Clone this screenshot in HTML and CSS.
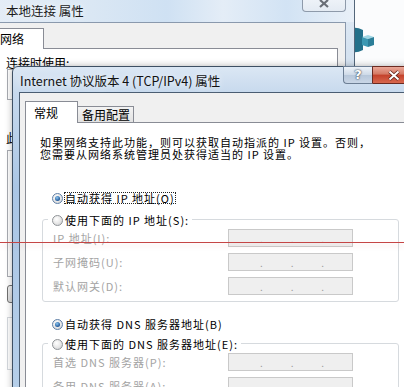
FILE: index.html
```html
<!DOCTYPE html>
<html lang="zh-CN">
<head>
  <meta charset="UTF-8" />
  <title>Internet 协议版本 4 (TCP/IPv4) 属性</title>
  <link rel="stylesheet" href="styles.css">
</head>
<body>

  <div class="desk-icon">
    <svg width="24" height="28" viewBox="0 0 24 28">
      <path d="M1 2 Q5 1 11 4 L11 24 Q5 27 1 26 Q3 14 1 2 Z" fill="#23708a"/>
      <path d="M10 11 L16 9 L22 11 L16 13 Z" fill="#9fd6e4"/>
      <path d="M10 11 L16 13 L16 21 L10 19 Z" fill="#3b98b2"/>
      <path d="M16 13 L22 11 L22 19 L16 21 Z" fill="#2b7e98"/>
    </svg>
  </div>

  <!-- window behind -->
  <div class="win win-back">
    <div class="titlebar">
      <div class="title">本地连接 属性</div>
      <div class="btn-close">
        <svg width="12" height="9" viewBox="0 0 12 9"><path d="M2 1 L10 8 M10 1 L2 8" stroke="#6a6f77" stroke-width="2.2"/></svg>
      </div>
    </div>
    <div class="client">
      <div class="tabs">
        <div class="tab active">网络</div>
      </div>
      <div class="panel">
        <div class="lbl">连接时使用:</div>
        <div class="box adapter"></div>
        <div class="lbl gap">此连接使用下列项目:</div>
        <div class="box list"></div>
        <div class="box small-btn"></div>
        <div class="box desc"></div>
      </div>
    </div>
  </div>

  <!-- front dialog -->
  <div class="win win-front">
    <div class="titlebar">
      <div class="title">Internet 协议版本 4 (TCP/IPv4) 属性</div>
      <div class="btn-help">?</div>
      <div class="btn-close">
        <svg width="14" height="11" viewBox="0 0 14 11">
          <path d="M2.5 1.5 L11.5 9.5 M11.5 1.5 L2.5 9.5" stroke="#5b1f16" stroke-width="3.6"/>
          <path d="M2.5 1.5 L11.5 9.5 M11.5 1.5 L2.5 9.5" stroke="#fff" stroke-width="2"/>
        </svg>
      </div>
    </div>
    <div class="client">
      <div class="tabs">
        <div class="tab active">常规</div>
        <div class="tab">备用配置</div>
      </div>
      <div class="panel">
        <p class="intro">如果网络支持此功能，则可以获取自动指派的 IP 设置。否则，<br>您需要从网络系统管理员处获得适当的 IP 设置。</p>

        <div class="opt first">
          <span class="radio on"></span><span class="focus">自动获得 IP 地址(O)</span>
        </div>
        <div class="group">
          <div class="opt legend">
            <span class="radio"></span><span class="txt">使用下面的 IP 地址(S):</span>
          </div>
          <div class="field-row">
            <span class="flabel">IP 地址(I):</span>
            <span class="ip"><span>.</span><span>.</span><span>.</span></span>
          </div>
          <div class="field-row">
            <span class="flabel">子网掩码(U):</span>
            <span class="ip"><span>.</span><span>.</span><span>.</span></span>
          </div>
          <div class="field-row">
            <span class="flabel">默认网关(D):</span>
            <span class="ip"><span>.</span><span>.</span><span>.</span></span>
          </div>
        </div>

        <div class="opt dns">
          <span class="radio on"></span><span class="txt">自动获得 DNS 服务器地址(B)</span>
        </div>
        <div class="group dns-group">
          <div class="opt legend">
            <span class="radio"></span><span class="txt">使用下面的 DNS 服务器地址(E):</span>
          </div>
          <div class="field-row">
            <span class="flabel">首选 DNS 服务器(P):</span>
            <span class="ip"><span>.</span><span>.</span><span>.</span></span>
          </div>
          <div class="field-row">
            <span class="flabel">备用 DNS 服务器(A):</span>
            <span class="ip"><span>.</span><span>.</span><span>.</span></span>
          </div>
        </div>
      </div>
    </div>
  </div>

  <div class="mark-line"></div>

</body>
</html>
```

FILE: styles.css
```css
body {
  margin: 0;
  width: 404px;
  height: 387px;
  overflow: hidden;
  position: relative;
  background: #fbfcfd;
  font-family: "Noto Sans CJK SC", sans-serif;
  color: #000;
}

.desk-icon {
  position: absolute;
  left: 352px;
  top: 26px;
}

.win {
  position: absolute;
  box-sizing: border-box;
}

/* ---- back window ---- */
.win-back {
  left: -20px;
  top: -8px;
  width: 375px;
  height: 420px;
  border-right: 1px solid #53667a;
  background: linear-gradient(180deg, #e3ecf6 0, #d5e2f0 60px, #d9e3ee 100%);
}
.win-back .titlebar {
  height: 30px;
  display: flex;
  align-items: flex-start;
  padding: 0 8px 0 26px;
  box-sizing: border-box;
  background: linear-gradient(90deg, #e6eef7 0%, #dae7f4 30%, #cfe1f3 50%, #e4edf7 65%, #d2e3f4 82%, #e9f0f8 100%);
}
.win-back .title {
  flex: 1;
  margin-top: 8px;
  line-height: 22px;
  font-size: 12.5px;
  color: #1b1b1b;
  text-shadow: 0 0 6px #fff;
}
.win-back .btn-close {
  width: 44px;
  height: 20px;
  box-sizing: border-box;
  border: 1px solid #8e9aaa;
  border-top: none;
  border-radius: 0 0 4px 4px;
  background: linear-gradient(#f4f7fb, #e4ebf3);
  display: flex;
  align-items: flex-end;
  justify-content: center;
  padding-bottom: 3px;
}
.win-back .client {
  margin: 0 8px;
  height: 390px;
  box-sizing: border-box;
  border: 1px solid #8a99ad;
  border-bottom: none;
  background: #f0f0f0;
  padding-top: 5px;
}
.win-back .tab {
  width: 55px;
  height: 21px;
  box-sizing: border-box;
  margin-bottom: -1px;
  padding-left: 10px;
  border: 1px solid #898c95;
  border-bottom: none;
  background: #fff;
  font-size: 12px;
  line-height: 20px;
  position: relative;
  z-index: 1;
}
.win-back .panel {
  margin-right: 7px;
  height: 360px;
  box-sizing: border-box;
  border: 1px solid #898c95;
  background: #fff;
  padding: 8px 0 0 16px;
}
.lbl {
  font-size: 12px;
  line-height: 12px;
}
.lbl.gap {
  margin-top: 32px;
}
.box {
  margin-left: 1px;
  width: 300px;
  box-sizing: border-box;
  border: 1px solid #a9acb2;
  background: #fff;
}
.adapter {
  height: 31px;
}
.list {
  margin-top: 6px;
  height: 127px;
}
.small-btn {
  margin-top: 8px;
  width: 70px;
  height: 18px;
  border-color: #707070;
  border-radius: 3px;
  background: linear-gradient(#f2f2f2, #dcdcdc);
}
.desc {
  margin-top: 14px;
  height: 53px;
  border-color: #d5d9de;
}

/* ---- front dialog ---- */
.win-front {
  left: 12px;
  top: 66px;
  width: 404px;
  height: 340px;
  border: 1px solid #3e5064;
  border-radius: 6px 6px 0 0;
  background: linear-gradient(180deg, #dbe7f4 0, #c7d9ed 26px, #aac6e5 120px, #b6cfe9 100%);
  box-shadow: 0 0 7px rgba(0, 0, 0, .3);
}
.win-front .titlebar {
  height: 25px;
  display: flex;
  align-items: flex-start;
  padding-left: 7px;
}
.win-front .title {
  flex: 1;
  padding-top: 2px;
  line-height: 24px;
  font-size: 12.5px;
  color: #111;
  text-shadow: 0 0 7px #fff;
}
.btn-help {
  width: 29px;
  height: 18px;
  margin-top: -1px;
  box-sizing: border-box;
  border: 1px solid #6c7e94;
  border-right: none;
  border-radius: 0 0 0 4px;
  background: linear-gradient(#eef3f9, #cdd9e7 50%, #b7c7da 51%, #c9d6e6);
  text-align: center;
  font: bold 13px/16px "DejaVu Sans", sans-serif;
  color: #fff;
  text-shadow: 0 0 1px #2e3c4e, 0 0 2px #2e3c4e;
}
.win-front .btn-close {
  width: 43px;
  height: 18px;
  margin-top: -1px;
  box-sizing: border-box;
  border: 1px solid #6b2a21;
  border-radius: 0 0 4px 0;
  background: linear-gradient(#eaa798, #d47863 45%, #c4412b 50%, #d8684f);
  display: flex;
  align-items: center;
  justify-content: center;
}
.win-front .client {
  margin: 0 6px;
  height: 320px;
  box-sizing: border-box;
  border: 1px solid #4a5d72;
  border-bottom: none;
  background: #f0f0f0;
  padding: 8px 0 0 5px;
}
.tabs {
  display: flex;
  align-items: flex-end;
}
.win-front .tabs {
  height: 21px;
}
.win-front .tab {
  width: 57px;
  height: 16px;
  box-sizing: border-box;
  margin-left: -1px;
  padding-left: 4px;
  border: 1px solid #898c95;
  border-bottom: none;
  background: linear-gradient(#f3f3f3, #e2e2e2);
  font-size: 12px;
  line-height: 15px;
}
.win-front .tab.active {
  width: 53px;
  height: 22px;
  margin-left: 0;
  margin-bottom: -1px;
  padding: 4px 0 0 8px;
  background: #fff;
  line-height: 14px;
  position: relative;
  z-index: 1;
}
.win-front .panel {
  height: 280px;
  box-sizing: border-box;
  border: 1px solid #898c95;
  background: #fff;
  padding: 13px 0 0 14px;
}

.intro,
.opt,
.flabel {
  font-size: 11px;
  letter-spacing: 1px;
}
.intro {
  margin: 0;
  line-height: 12px;
}

.opt {
  display: flex;
  align-items: center;
  height: 12px;
  line-height: 12px;
  padding-left: 12px;
}
.opt.first {
  margin-top: 32px;
}
.opt.dns {
  margin-top: 16px;
}
.opt .txt {
  margin-left: 2px;
}
.focus {
  margin-left: 1px;
  border: 1px dotted #222;
  line-height: 10px;
}
.radio {
  flex: none;
  position: relative;
  width: 11px;
  height: 11px;
  box-sizing: border-box;
  border-radius: 50%;
  border: 1px solid #8f9397;
  background: radial-gradient(circle at 40% 35%, #fff 0, #e6e6e6 55%, #c4c8cd 100%);
}
.radio.on {
  border-color: #5f7fa6;
}
.radio.on::after {
  content: "";
  position: absolute;
  left: 2px;
  top: 2px;
  width: 5px;
  height: 5px;
  border-radius: 50%;
  background: radial-gradient(circle at 40% 35%, #8cc6f0, #184f92 75%);
}

.group {
  margin: 15px 0 0 2px;
  width: 357px;
  box-sizing: border-box;
  border: 1px solid #d6dade;
  border-radius: 3px;
  padding: 0 0 6px 10px;
}
.group.dns-group {
  margin-top: 13px;
  height: 80px;
}
.opt.legend {
  width: fit-content;
  margin: -6px 0 0 -5px;
  padding: 0 3px 0 4px;
  background: #fff;
}
.field-row {
  display: flex;
  align-items: center;
  height: 18px;
  margin-top: 6px;
}
.legend + .field-row {
  margin-top: 3px;
}
.flabel {
  width: 175px;
  color: #a3a3a3;
  line-height: 12px;
}
.ip {
  display: flex;
  align-items: flex-end;
  width: 125px;
  height: 18px;
  box-sizing: border-box;
  border: 1px solid #c9c9c9;
  background: #efefef;
  padding: 0 0 3px 31px;
  font-size: 10px;
  line-height: 8px;
  color: #9a9a9a;
}
.ip span {
  width: 32px;
}

.mark-line {
  position: absolute;
  left: 0;
  top: 242px;
  width: 404px;
  height: 1px;
  background: #c54545;
  box-shadow: 0 3px 5px rgba(225, 130, 130, .3);
}
```
